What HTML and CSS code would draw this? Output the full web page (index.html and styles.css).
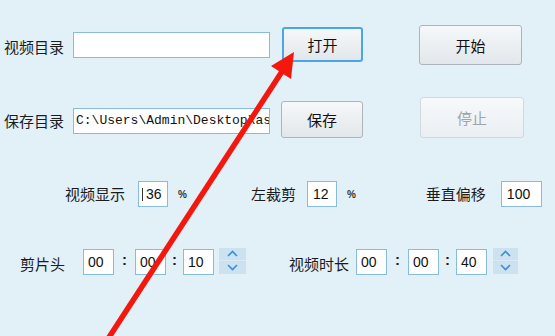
FILE: index.html
```html
<!DOCTYPE html>
<html lang="zh-CN">
<head>
    <meta charset="UTF-8">
    <meta name="viewport" content="width=device-width, initial-scale=1.0">
    <title>视频剪辑</title>
    <link rel="stylesheet" href="styles.css">
</head>
<body>
    <main class="panel">
        <div class="row row_dir">
            <span class="label label_dir">视频目录</span>
            <div class="box box_path"></div>
            <button class="btn btn_open focus">打开</button>
            <button class="btn btn_start">开始</button>
        </div>
        <div class="row row_save">
            <span class="label label_save">保存目录</span>
            <div class="box box_path box_save mono">C:\Users\Admin\Desktop\as</div>
            <button class="btn btn_save">保存</button>
            <button class="btn btn_stop" disabled>停止</button>
        </div>
        <div class="row row_opts">
            <span class="label">视频显示</span>
            <div class="box box_small box_show"><span class="caret"></span>36</div>
            <span class="pct">%</span>
            <span class="label label_left">左裁剪</span>
            <div class="box box_small box_crop">12</div>
            <span class="pct">%</span>
            <span class="label label_vert">垂直偏移</span>
            <div class="box box_wide">100</div>
        </div>
        <div class="row row_time">
            <span class="label label_head">剪片头</span>
            <div class="box box_time">00</div>
            <span class="colon colon_a">:</span>
            <div class="box box_time">00</div>
            <span class="colon colon_b">:</span>
            <div class="box box_time">10</div>
            <div class="spin">
                <span class="spin_up"><svg width="11" height="7" viewBox="0 0 11 7"><path d="M1 6 L5.5 1.5 L10 6" fill="none" stroke="#3a8edb" stroke-width="1.6"/></svg></span>
                <span class="spin_down"><svg width="11" height="7" viewBox="0 0 11 7"><path d="M1 1 L5.5 5.5 L10 1" fill="none" stroke="#3a8edb" stroke-width="1.6"/></svg></span>
            </div>

            <span class="label label_len">视频时长</span>
            <div class="box box_time">00</div>
            <span class="colon colon_a">:</span>
            <div class="box box_time">00</div>
            <span class="colon colon_b">:</span>
            <div class="box box_time">40</div>
            <div class="spin">
                <span class="spin_up"><svg width="11" height="7" viewBox="0 0 11 7"><path d="M1 6 L5.5 1.5 L10 6" fill="none" stroke="#3a8edb" stroke-width="1.6"/></svg></span>
                <span class="spin_down"><svg width="11" height="7" viewBox="0 0 11 7"><path d="M1 1 L5.5 5.5 L10 1" fill="none" stroke="#3a8edb" stroke-width="1.6"/></svg></span>
            </div>
        </div>
    </main>
    <!-- 红色箭头 (覆盖在界面上) -->
    <svg class="arrow" width="555" height="336" viewBox="0 0 555 336">
        <line x1="104" y1="345" x2="283" y2="70" stroke="#f3170d" stroke-width="5.5"/>
        <polygon points="294,52 271,66 291,79" fill="#f3170d"/>
    </svg>
</body>
</html>
```

FILE: styles.css
```css
* {
    margin: 0;
    padding: 0;
    box-sizing: border-box;
}
html, body {
    width: 555px;
    height: 336px;
    overflow: hidden;
}
body {
    background-color: #e2f0f8;
    font-family: "Noto Sans CJK SC", "Microsoft YaHei", sans-serif;
    color: #1c1c1c;
    position: relative;
}
.panel {
    padding-top: 25px;
}
.row {
    display: flex;
    align-items: flex-start;
}
.label {
    font-size: 15px;
    line-height: 20px;
    white-space: nowrap;
}
.box {
    background-color: white;
    border: 1px solid #86bce2;
    height: 26px;
    font-family: "Liberation Sans", sans-serif;
    font-size: 14px;
    line-height: 24px;
    padding-left: 5px;
    color: #111;
    overflow: hidden;
    white-space: nowrap;
}
.mono {
    font-family: "Liberation Mono", monospace;
    font-size: 13px;
    padding-left: 2px;
}
.btn {
    font-family: "Noto Sans CJK SC", sans-serif;
    font-size: 15px;
    color: #111;
    background: linear-gradient(#f6f8fa, #e2e7eb);
    border: 1px solid #adb4ba;
    border-radius: 3px;
}
.btn.focus {
    border: 2px solid #4aa6e8;
}
.btn:disabled {
    color: #9ea4a8;
    background: linear-gradient(#f7f9fb, #eaeff3);
    border-color: #d2d9de;
}

/* 第一行 */
.row_dir {
    height: 40px;
}
.label_dir {
    margin: 12px 0 0 4px;
}
.box_path {
    width: 197px;
    margin: 7px 0 0 9px;
}
.btn_open {
    width: 81px;
    height: 35px;
    margin: 2px 0 0 12px;
}
.btn_start {
    width: 103px;
    height: 40px;
    margin-left: 56px;
}

/* 第二行 */
.row_save {
    margin-top: 32px;
    height: 41px;
}
.label_save {
    margin: 14px 0 0 4px;
}
.box_save {
    margin-top: 11px;
}
.btn_save {
    width: 82px;
    height: 37px;
    margin: 4px 0 0 11px;
}
.btn_stop {
    width: 104px;
    height: 41px;
    margin-left: 57px;
}

/* 第三行 */
.row_opts {
    margin-top: 43px;
    height: 26px;
    align-items: center;
    padding-left: 65px;
}
.box_small {
    width: 30px;
}
.box_show {
    margin-left: 13px;
    padding-left: 3px;
}
.caret {
    display: inline-block;
    width: 1px;
    height: 13px;
    margin-right: 3px;
    vertical-align: -2px;
    background-color: #333;
}
.pct {
    font-family: "Liberation Sans", sans-serif;
    font-size: 10px;
    font-weight: bold;
    margin-left: 10px;
    color: #333;
}
.label_left {
    margin-left: 64px;
}
.box_crop {
    margin-left: 11px;
}
.label_vert {
    margin-left: 70px;
}
.box_wide {
    width: 41px;
    margin-left: 15px;
}

/* 第四行 */
.row_time {
    margin-top: 41px;
    height: 28px;
    align-items: center;
}
.label_head {
    margin-left: 20px;
    margin-top: 4px;
}
.label_head + .box {
    margin-left: 18px;
}
.box_time {
    width: 31px;
    padding-left: 4px;
}
.colon {
    font-family: "Liberation Sans", sans-serif;
    font-weight: bold;
    font-size: 15px;
    text-align: center;
    margin-top: -5px;
}
.colon_a {
    width: 21px;
}
.colon_b {
    width: 17px;
}
.spin {
    width: 27px;
    height: 26px;
    margin-left: 5px;
    margin-top: -3px;
    background-color: #c9e0f0;
    display: flex;
    flex-direction: column;
    gap: 1px;
}
.spin span {
    flex: 1;
    background-color: #cde2f1;
    display: flex;
    justify-content: center;
    align-items: center;
}
.spin_up {
    border-bottom: 1px solid #dbeaf5;
}
.label_len {
    margin-left: 43px;
    margin-top: 4px;
}
.label_len + .box {
    margin-left: 7px;
}
.label_len ~ .spin {
    margin-left: 6px;
    width: 25px;
}

.arrow {
    position: absolute;
    left: 0;
    top: 0;
    pointer-events: none;
}
```
